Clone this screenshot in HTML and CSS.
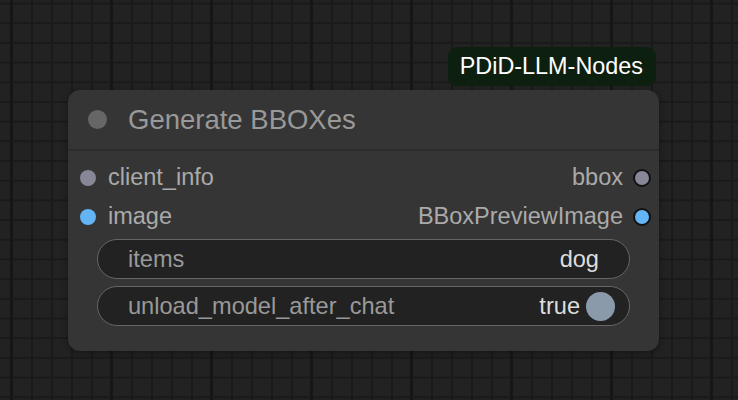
FILE: index.html
```html
<!DOCTYPE html>
<html>
<head>
<meta charset="utf-8">
<link rel="stylesheet" href="styles.css">
</head>
<body>
<div class="canvas">
  <div class="node-wrap">
    <div class="badge">PDiD-LLM-Nodes</div>
    <div class="node">
      <div class="title">
        <span class="title-dot"></span>
        <span class="title-text">Generate BBOXes</span>
      </div>
      <div class="body">
        <div class="slots">
          <div class="slot-row">
            <div class="slot in"><span class="dot grey"></span><span class="label">client_info</span></div>
            <div class="slot out"><span class="label">bbox</span><span class="dot grey ring"></span></div>
          </div>
          <div class="slot-row">
            <div class="slot in"><span class="dot blue"></span><span class="label">image</span></div>
            <div class="slot out"><span class="label">BBoxPreviewImage</span><span class="dot blue ring"></span></div>
          </div>
        </div>
        <div class="widgets">
          <div class="widget">
            <span class="w-label">items</span>
            <span class="w-value">dog</span>
          </div>
          <div class="widget toggle">
            <span class="w-label">unload_model_after_chat</span>
            <span class="w-value">true</span>
            <span class="knob"></span>
          </div>
        </div>
      </div>
    </div>
  </div>
</div>
</body>
</html>
```
FILE: styles.css
```css
html, body {
  margin: 0;
  padding: 0;
}
body {
  width: 738px;
  height: 400px;
  overflow: hidden;
  background-color: #222222;
  background-image:
    linear-gradient(to right, #161616 3px, transparent 3px),
    linear-gradient(to right, #1a1a1a 2px, transparent 2px),
    linear-gradient(to bottom, #1a1a1a 2px, transparent 2px);
  background-size: 100px 100%, 20px 100%, 100% 19.7px;
  background-position: 110px 0, 11px 0, 0 2.5px;
  font-family: "Liberation Sans", Arial, sans-serif;
}
.canvas {
  padding: 47px 0 0 68px;
}
.node-wrap {
  width: 591px;
  display: flex;
  flex-direction: column;
}
.badge {
  align-self: flex-end;
  margin-right: 3px;
  height: 39px;
  padding: 0 13px 0 12px;
  background: #0d1f0f;
  color: #ffffff;
  border-radius: 9px;
  font-size: 23.4px;
  line-height: 39px;
  margin-bottom: 4px;
}
.node {
  height: 261px;
  background: #353535;
  border-radius: 12px;
  box-shadow: 0 2px 6px rgba(0,0,0,0.35);
  display: flex;
  flex-direction: column;
}
.title {
  height: 59px;
  border-bottom: 2px solid #2c2c2c;
  display: flex;
  align-items: center;
  padding-left: 20px;
  gap: 21px;
}
.title-dot {
  width: 19px;
  height: 19px;
  border-radius: 50%;
  background: #666666;
}
.title-text {
  color: #999999;
  font-size: 27.5px;
}
.body {
  padding-top: 7px;
  display: flex;
  flex-direction: column;
}
.slot-row {
  height: 39px;
  display: flex;
  align-items: center;
  justify-content: space-between;
}
.slot {
  display: flex;
  align-items: center;
  font-size: 23.5px;
  color: #aaaaaa;
}
.slot.in {
  padding-left: 12px;
  gap: 12px;
}
.slot.out {
  padding-right: 8px;
  gap: 10px;
}
.dot {
  width: 16px;
  height: 16px;
  border-radius: 50%;
}
.dot.grey { background: #878797; }
.dot.blue { background: #64b5f6; }
.dot.ring {
  width: 14px;
  height: 14px;
  border: 2px solid #111111;
}
.widgets {
  margin-top: 3px;
  display: flex;
  flex-direction: column;
  gap: 7px;
  padding: 0 29px;
}
.widget {
  height: 38px;
  border: 1.5px solid #666666;
  border-radius: 20px;
  background: #222222;
  display: flex;
  align-items: center;
  padding: 0 30px 0 30px;
  font-size: 23.6px;
}
.widget.toggle {
  padding-right: 14px;
}
.w-label {
  color: #999999;
  flex: 1;
}
.w-value {
  color: #dddddd;
}
.knob {
  width: 29px;
  height: 29px;
  border-radius: 50%;
  background: #8a9aab;
  margin-left: 6px;
}
```
